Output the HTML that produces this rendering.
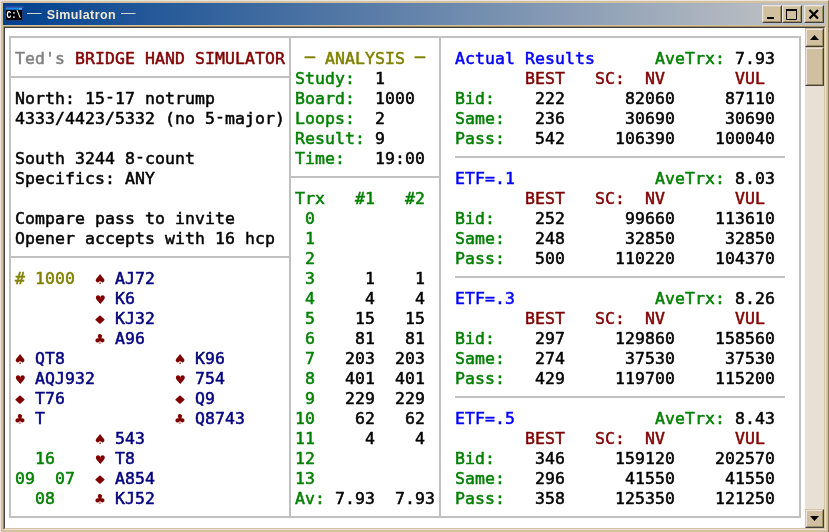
<!DOCTYPE html>
<html><head><meta charset="utf-8"><title>Simulatron</title>
<style>
html,body{margin:0;padding:0;background:#d2c2a2;}
body{width:829px;height:532px;position:relative;overflow:hidden;font-family:"Liberation Sans",sans-serif;}
#frame{position:absolute;left:0;top:0;width:829px;height:532px;background:#d2c2a2;box-sizing:border-box;border-left:1px solid #ece4dc;border-top:1px solid #ece4dc;border-right:1px solid #8c7850;}
#title{position:absolute;left:3px;top:3px;width:823px;height:22px;background:linear-gradient(to right,#00408f 0%,#b8bcc2 92%,#bec2c6 100%);}
#title .txt{will-change:transform;position:absolute;left:0;top:4px;color:#f0e8d4;font:bold 12.5px/16px "Liberation Sans",sans-serif;white-space:pre;letter-spacing:0.4px}
#title .txt b{position:absolute;top:-2px;font-weight:normal;letter-spacing:0;display:block;width:14.5px;height:16px;transform-origin:0 0;transform:scaleX(1.16)}
#title .txt u{position:absolute;left:43.7px;top:0;text-decoration:none}
#ico{position:absolute;left:2px;top:3px;width:19px;height:16px;will-change:transform}
#ico text{font:bold 10.5px "Liberation Mono",monospace;fill:#fff}
.btn{position:absolute;top:2px;width:20px;height:18px;box-sizing:border-box;background:#d0c0a0;border:1px solid;border-color:#f0e8e0 #404040 #404040 #f0e8e0;}
.btn:before{content:"";position:absolute;left:0;top:0;right:0;bottom:0;border:1px solid;border-color:#d8c8ac #a08c60 #a08c60 #d8c8ac;}
#cb{position:absolute;left:3px;top:26px;width:823px;height:504px;box-sizing:border-box;border:1px solid;border-color:#a08c60 #ece4dc #ece4dc #a08c60;}
#cb2{position:absolute;left:4px;top:27px;width:821px;height:502px;box-sizing:border-box;border:1px solid;border-color:#404040 #d2c2a2 #d2c2a2 #404040;}
#client{position:absolute;left:5px;top:28px;width:800px;height:500px;background:#fff;}
#sb{position:absolute;left:805px;top:28px;width:19px;height:500px;background:#e8e0d4;}
.sbtn{position:absolute;left:0;width:19px;box-sizing:border-box;background:#d0c0a0;border:1px solid;border-color:#d4c4a4 #404040 #404040 #d4c4a4;}
.sbtn:before{content:"";position:absolute;left:0;top:0;right:0;bottom:0;border:1px solid;border-color:#ece4dc #a08c60 #a08c60 #ece4dc;}
#scr{position:absolute;left:0;top:0;width:829px;height:532px;will-change:transform;}
.row{position:absolute;left:0;height:20px;width:829px;}
.row span{position:absolute;top:1px;white-space:pre;font:16.5px/20px "DejaVu Sans Mono","Liberation Mono",monospace;letter-spacing:0.067px;-webkit-text-stroke-width:0.5px;}
.k{color:#000}.g{color:#008000}.r{color:#800000}.n{color:#000080}.b{color:#0000ff}.o{color:#808000}.y{color:#808080}.s{color:#800000}
.row span.s{-webkit-text-stroke-width:0;width:10px;text-align:center;letter-spacing:0}
.row span.s0{transform:translate(0.3px,1px) scale(1.1,1)}
.row span.s1{transform:translate(0.3px,1.6px) scale(0.92,0.9)}
.row span.s2{transform:translate(0px,1.1px) scale(1.25,0.9)}
.row span.s3{transform:translate(0px,1px) scale(1,1)}
.row span.d{transform:translateY(-1px)}
.row span i{font-style:normal;position:relative;top:-2px}
.ln{position:absolute;background:#c0c0c0;}
</style></head><body>
<div id="frame"></div>
<div id="title"><svg id="ico" viewBox="0 0 19 16"><rect x="0.4" y="0" width="18.4" height="15.2" fill="#183c80"/><rect x="0.6" y="0.4" width="18" height="1.6" fill="#2c5cb0"/><rect x="0.6" y="2" width="16.4" height="1.5" fill="#1888ec"/><rect x="14" y="2" width="3" height="1.5" fill="#58b0f8"/><rect x="1" y="4" width="16" height="10" fill="#000"/><text x="1.6" y="12.4" textLength="14.5" lengthAdjust="spacingAndGlyphs">C:\</text></svg><span class="txt"><b style="left:24px">—</b><u>Simulatron</u><b style="left:117.5px">—</b></span>
<div class="btn" style="left:759px"><svg width="18" height="16" style="position:absolute;left:0;top:0"><rect x="4" y="11" width="7" height="2" fill="#000"/></svg></div>
<div class="btn" style="left:779px"><svg width="18" height="16" style="position:absolute;left:0;top:0"><path d="M3.5 4.5h10v9h-10z" fill="none" stroke="#000" stroke-width="1"/><rect x="3" y="3" width="11" height="2" fill="#000"/></svg></div>
<div class="btn" style="left:801px"><svg width="18" height="16" style="position:absolute;left:0;top:0"><path d="M4.5 4l8.5 8.5M13 4l-8.5 8.5" fill="none" stroke="#000" stroke-width="2.2"/></svg></div>
</div>
<div id="cb"></div><div id="cb2"></div>
<div id="client"></div>
<div id="sb">
<div class="sbtn" style="top:0;height:19px"><svg width="17" height="17" style="position:absolute;left:0;top:0"><path d="M4 11l4.5-5 4.5 5z" fill="#000"/></svg></div>
<div class="sbtn" style="top:19px;height:39px"></div>
<div class="sbtn" style="top:481px;height:19px"><svg width="17" height="17" style="position:absolute;left:0;top:0"><path d="M4 6l4.5 5 4.5-5z" fill="#000"/></svg></div>
</div>
<!-- grid lines -->
<div class="ln" style="left:9px;top:36px;width:792px;height:2px"></div>
<div class="ln" style="left:9px;top:516px;width:792px;height:2px"></div>
<div class="ln" style="left:9px;top:36px;width:2px;height:482px"></div>
<div class="ln" style="left:799px;top:36px;width:2px;height:482px"></div>
<div class="ln" style="left:289px;top:36px;width:2px;height:482px"></div>
<div class="ln" style="left:439px;top:36px;width:2px;height:482px"></div>
<div class="ln" style="left:9px;top:76px;width:282px;height:2px"></div>
<div class="ln" style="left:9px;top:256px;width:282px;height:2px"></div>
<div class="ln" style="left:289px;top:176px;width:152px;height:2px"></div>
<div class="ln" style="left:455px;top:156px;width:330px;height:2px"></div>
<div class="ln" style="left:455px;top:276px;width:330px;height:2px"></div>
<div class="ln" style="left:455px;top:396px;width:330px;height:2px"></div>
<div id="scr">
<div class="row" style="top:48px"><span class="y" style="left:15px">Ted's</span> <span class="r" style="left:75px">BRIDGE HAND SIMULATOR</span> <span class="o d" style="left:305px">─</span> <span class="o" style="left:325px">ANALYSIS</span> <span class="o d" style="left:415px">─</span> <span class="b" style="left:455px">Actual Results</span> <span class="g" style="left:655px">AveTrx:</span> <span class="k" style="left:735px">7.93</span></div>
<div class="row" style="top:68px"><span class="g" style="left:295px">Study:</span> <span class="k" style="left:375px">1</span> <span class="r" style="left:525px">BEST</span> <span class="r" style="left:595px">SC:</span> <span class="r" style="left:645px">NV</span> <span class="r" style="left:735px">VUL</span></div>
<div class="row" style="top:88px"><span class="k" style="left:15px">North: 15<i>-</i>17 notrump</span> <span class="g" style="left:295px">Board:</span> <span class="k" style="left:375px">1000</span> <span class="g" style="left:455px">Bid:</span> <span class="k" style="left:535px">222</span> <span class="k" style="left:625px">82060</span> <span class="k" style="left:725px">87110</span></div>
<div class="row" style="top:108px"><span class="k" style="left:15px">4333/4423/5332 (no 5<i>-</i>major)</span> <span class="g" style="left:295px">Loops:</span> <span class="k" style="left:375px">2</span> <span class="g" style="left:455px">Same:</span> <span class="k" style="left:535px">236</span> <span class="k" style="left:625px">30690</span> <span class="k" style="left:725px">30690</span></div>
<div class="row" style="top:128px"><span class="g" style="left:295px">Result:</span> <span class="k" style="left:375px">9</span> <span class="g" style="left:455px">Pass:</span> <span class="k" style="left:535px">542</span> <span class="k" style="left:615px">106390</span> <span class="k" style="left:715px">100040</span></div>
<div class="row" style="top:148px"><span class="k" style="left:15px">South 3244 8<i>-</i>count</span> <span class="g" style="left:295px">Time:</span> <span class="k" style="left:375px">19:00</span></div>
<div class="row" style="top:168px"><span class="k" style="left:15px">Specifics: ANY</span> <span class="b" style="left:455px">ETF=.1</span> <span class="g" style="left:655px">AveTrx:</span> <span class="k" style="left:735px">8.03</span></div>
<div class="row" style="top:188px"><span class="g" style="left:295px">Trx</span> <span class="g" style="left:355px">#1</span> <span class="g" style="left:405px">#2</span> <span class="r" style="left:525px">BEST</span> <span class="r" style="left:595px">SC:</span> <span class="r" style="left:645px">NV</span> <span class="r" style="left:735px">VUL</span></div>
<div class="row" style="top:208px"><span class="k" style="left:15px">Compare pass to invite</span> <span class="g" style="left:305px">0</span> <span class="g" style="left:455px">Bid:</span> <span class="k" style="left:535px">252</span> <span class="k" style="left:625px">99660</span> <span class="k" style="left:715px">113610</span></div>
<div class="row" style="top:228px"><span class="k" style="left:15px">Opener accepts with 16 hcp</span> <span class="g" style="left:305px">1</span> <span class="g" style="left:455px">Same:</span> <span class="k" style="left:535px">248</span> <span class="k" style="left:625px">32850</span> <span class="k" style="left:725px">32850</span></div>
<div class="row" style="top:248px"><span class="g" style="left:305px">2</span> <span class="g" style="left:455px">Pass:</span> <span class="k" style="left:535px">500</span> <span class="k" style="left:615px">110220</span> <span class="k" style="left:715px">104370</span></div>
<div class="row" style="top:268px"><span class="o" style="left:15px"># 1000</span> <span class="s s0" style="left:95px">♠</span> <span class="n" style="left:115px">AJ72</span> <span class="g" style="left:305px">3</span> <span class="k" style="left:365px">1</span> <span class="k" style="left:415px">1</span></div>
<div class="row" style="top:288px"><span class="s s1" style="left:95px">♥</span> <span class="n" style="left:115px">K6</span> <span class="g" style="left:305px">4</span> <span class="k" style="left:365px">4</span> <span class="k" style="left:415px">4</span> <span class="b" style="left:455px">ETF=.3</span> <span class="g" style="left:655px">AveTrx:</span> <span class="k" style="left:735px">8.26</span></div>
<div class="row" style="top:308px"><span class="s s2" style="left:95px">♦</span> <span class="n" style="left:115px">KJ32</span> <span class="g" style="left:305px">5</span> <span class="k" style="left:355px">15</span> <span class="k" style="left:405px">15</span> <span class="r" style="left:525px">BEST</span> <span class="r" style="left:595px">SC:</span> <span class="r" style="left:645px">NV</span> <span class="r" style="left:735px">VUL</span></div>
<div class="row" style="top:328px"><span class="s s3" style="left:95px">♣</span> <span class="n" style="left:115px">A96</span> <span class="g" style="left:305px">6</span> <span class="k" style="left:355px">81</span> <span class="k" style="left:405px">81</span> <span class="g" style="left:455px">Bid:</span> <span class="k" style="left:535px">297</span> <span class="k" style="left:615px">129860</span> <span class="k" style="left:715px">158560</span></div>
<div class="row" style="top:348px"><span class="s s0" style="left:15px">♠</span> <span class="n" style="left:35px">QT8</span> <span class="s s0" style="left:175px">♠</span> <span class="n" style="left:195px">K96</span> <span class="g" style="left:305px">7</span> <span class="k" style="left:345px">203</span> <span class="k" style="left:395px">203</span> <span class="g" style="left:455px">Same:</span> <span class="k" style="left:535px">274</span> <span class="k" style="left:625px">37530</span> <span class="k" style="left:725px">37530</span></div>
<div class="row" style="top:368px"><span class="s s1" style="left:15px">♥</span> <span class="n" style="left:35px">AQJ932</span> <span class="s s1" style="left:175px">♥</span> <span class="n" style="left:195px">754</span> <span class="g" style="left:305px">8</span> <span class="k" style="left:345px">401</span> <span class="k" style="left:395px">401</span> <span class="g" style="left:455px">Pass:</span> <span class="k" style="left:535px">429</span> <span class="k" style="left:615px">119700</span> <span class="k" style="left:715px">115200</span></div>
<div class="row" style="top:388px"><span class="s s2" style="left:15px">♦</span> <span class="n" style="left:35px">T76</span> <span class="s s2" style="left:175px">♦</span> <span class="n" style="left:195px">Q9</span> <span class="g" style="left:305px">9</span> <span class="k" style="left:345px">229</span> <span class="k" style="left:395px">229</span></div>
<div class="row" style="top:408px"><span class="s s3" style="left:15px">♣</span> <span class="n" style="left:35px">T</span> <span class="s s3" style="left:175px">♣</span> <span class="n" style="left:195px">Q8743</span> <span class="g" style="left:295px">10</span> <span class="k" style="left:355px">62</span> <span class="k" style="left:405px">62</span> <span class="b" style="left:455px">ETF=.5</span> <span class="g" style="left:655px">AveTrx:</span> <span class="k" style="left:735px">8.43</span></div>
<div class="row" style="top:428px"><span class="s s0" style="left:95px">♠</span> <span class="n" style="left:115px">543</span> <span class="g" style="left:295px">11</span> <span class="k" style="left:365px">4</span> <span class="k" style="left:415px">4</span> <span class="r" style="left:525px">BEST</span> <span class="r" style="left:595px">SC:</span> <span class="r" style="left:645px">NV</span> <span class="r" style="left:735px">VUL</span></div>
<div class="row" style="top:448px"><span class="g" style="left:35px">16</span> <span class="s s1" style="left:95px">♥</span> <span class="n" style="left:115px">T8</span> <span class="g" style="left:295px">12</span> <span class="g" style="left:455px">Bid:</span> <span class="k" style="left:535px">346</span> <span class="k" style="left:615px">159120</span> <span class="k" style="left:715px">202570</span></div>
<div class="row" style="top:468px"><span class="g" style="left:15px">09</span> <span class="g" style="left:55px">07</span> <span class="s s2" style="left:95px">♦</span> <span class="n" style="left:115px">A854</span> <span class="g" style="left:295px">13</span> <span class="g" style="left:455px">Same:</span> <span class="k" style="left:535px">296</span> <span class="k" style="left:625px">41550</span> <span class="k" style="left:725px">41550</span></div>
<div class="row" style="top:488px"><span class="g" style="left:35px">08</span> <span class="s s3" style="left:95px">♣</span> <span class="n" style="left:115px">KJ52</span> <span class="g" style="left:295px">Av:</span> <span class="k" style="left:335px">7.93</span> <span class="k" style="left:395px">7.93</span> <span class="g" style="left:455px">Pass:</span> <span class="k" style="left:535px">358</span> <span class="k" style="left:615px">125350</span> <span class="k" style="left:715px">121250</span></div>
</div>
</body></html>
